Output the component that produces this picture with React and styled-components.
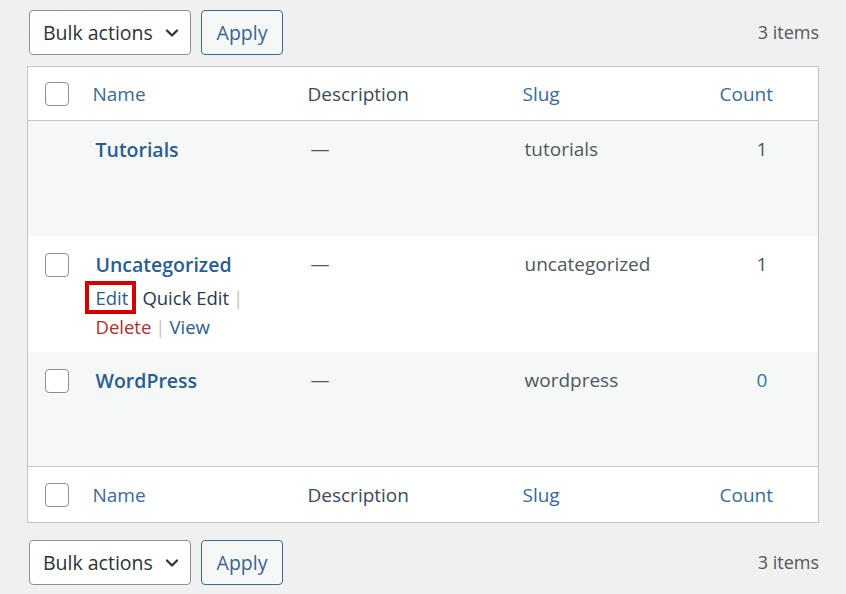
import React from "react";
import styled, { createGlobalStyle } from "styled-components";

const GlobalStyle = createGlobalStyle`
  html, body {
    margin: 0;
    padding: 0;
    background: #f0f0f1;
  }
  body {
    font-family: "Open Sans", "Noto Sans", "Liberation Sans", sans-serif;
    font-size: 19px;
    color: #3c434a;
  }
`;

const Page = styled.div`
  width: 846px;
  height: 594px;
  padding: 10px 27px 0 27px;
  box-sizing: border-box;
  display: flex;
  flex-direction: column;
`;

const Toolbar = styled.div`
  display: flex;
  align-items: center;
  gap: 10px;
  padding-left: 2px;
  margin: ${p => (p.bottom ? "17px 0 0" : "0 0 11px")};
`;

const Select = styled.div`
  width: 162px;
  height: 45px;
  box-sizing: border-box;
  border: 1px solid #8c8f94;
  border-radius: 4px;
  background: #fff;
  display: flex;
  align-items: center;
  justify-content: space-between;
  padding: 0 11px 0 13px;
  color: #2c3338;
  font-size: 19.5px;
`;

const ApplyButton = styled.button`
  width: 82px;
  height: 45px;
  box-sizing: border-box;
  border: 1px solid #3a6d8c;
  border-radius: 4px;
  background: #f6f7f7;
  color: #3a6290;
  font-family: inherit;
  font-size: 19.5px;
  padding: 0;
`;

const ItemCount = styled.span`
  margin-left: auto;
  color: #50575e;
  font-size: 18px;
  padding-bottom: 1px;
`;

const Table = styled.table`
  width: 792px;
  border-collapse: collapse;
  border: 1px solid #c3c4c7;
  background: #fff;
  table-layout: fixed;
`;

const HeadRow = styled.tr`
  height: ${p => (p.foot ? 56 : 54)}px;
  border-${p => (p.foot ? "top" : "bottom")}: 1px solid #c3c4c7;
`;

const Th = styled.th`
  text-align: left;
  font-weight: 400;
  padding: ${p => (p.foot ? "1px" : "0")} 0 0 ${p => p.pad || 12}px;
  color: ${p => (p.link ? "#3b6a98" : "#3c4a5a")};
  vertical-align: middle;
  white-space: nowrap;
`;

const Row = styled.tr`
  height: ${p => p.h}px;
  background: ${p => (p.striped ? "#f6f7f7" : "#fff")};
`;

const Td = styled.td`
  vertical-align: top;
  padding: 14px 0 0 ${p => p.pad || 12}px;
  line-height: 29px;
  color: ${p => p.color || "#50575e"};
`;

const CheckCell = styled.td`
  vertical-align: ${p => (p.head ? "middle" : "top")};
  padding: ${p => (p.head ? "0 0 0 17px" : "17px 0 0 17px")};
`;

const Checkbox = styled.span`
  display: block;
  width: 24px;
  height: 24px;
  box-sizing: border-box;
  border: 1px solid #8c8f94;
  border-radius: 4px;
  background: #fff;
`;

const Title = styled.a`
  font-weight: 600;
  font-size: 19.5px;
  color: #2a5d8f;
  text-decoration: none;
  padding-left: 3px;
`;

const Actions = styled.div`
  font-size: 18.5px;
  line-height: 29px;
  padding-left: 3px;
  margin-top: 3px;
  color: #2b3a48;
`;

const ActionLink = styled.a`
  color: ${p => p.color || "#2c5d8a"};
  text-decoration: none;
`;

const Highlight = styled.span`
  display: inline-block;
  border: 4px solid #d40000;
  line-height: 25px;
  padding: 0 4px 0 7px;
  margin: -2px 6px -2px -11px;
`;

const Sep = styled.span`
  color: #c3c4c7;
  margin: 0 4px 0 4px;
`;

const Dash = styled.span`
  padding-left: 3px;
  color: #50575e;
`;

const Chevron = () => (
  <svg width="14" height="14" viewBox="0 0 14 14" fill="none">
    <path d="M2 4.5l5 5 5-5" stroke="#2c3338" strokeWidth="2.2" strokeLinecap="round" strokeLinejoin="round" />
  </svg>
);

const TableActions = ({ bottom }) => (
  <Toolbar bottom={bottom}>
    <Select>
      <span>Bulk actions</span>
      <Chevron />
    </Select>
    <ApplyButton>Apply</ApplyButton>
    <ItemCount>3 items</ItemCount>
  </Toolbar>
);

const HeaderCells = ({ foot }) => (
  <HeadRow foot={foot}>
    <CheckCell head>
      <Checkbox />
    </CheckCell>
    <Th foot={foot} link>Name</Th>
    <Th foot={foot}>Description</Th>
    <Th foot={foot} link>Slug</Th>
    <Th foot={foot} link>Count</Th>
  </HeadRow>
);

const terms = [
  { name: "Tutorials", slug: "tutorials", count: "1", noCheck: true, h: 115 },
  { name: "Uncategorized", slug: "uncategorized", count: "1", actions: true, h: 116 },
  { name: "WordPress", slug: "wordpress", count: "0", countLink: true, h: 115 },
];

export default function App() {
  return (
    <>
      <GlobalStyle />
      <Page>
        <TableActions />
        <Table>
          <colgroup>
            <col style={{ width: 53 }} />
            <col style={{ width: 215 }} />
            <col style={{ width: 215 }} />
            <col style={{ width: 197 }} />
            <col />
          </colgroup>
          <thead>
            <HeaderCells />
          </thead>
          <tbody>
            {terms.map((t, i) => (
              <Row key={t.slug} h={t.h} striped={i % 2 === 0}>
                <CheckCell>{!t.noCheck && <Checkbox />}</CheckCell>
                <Td>
                  <Title href="#">{t.name}</Title>
                  {t.actions && (
                    <Actions>
                      <Highlight>
                        <ActionLink href="#">Edit</ActionLink>
                      </Highlight>
                      <ActionLink color="#2b3a48" href="#">Quick Edit</ActionLink>
                      <Sep>|</Sep>
                      <br />
                      <ActionLink color="#b32d2e" href="#">Delete</ActionLink>
                      <Sep>|</Sep>
                      <ActionLink href="#">View</ActionLink>
                    </Actions>
                  )}
                </Td>
                <Td>
                  <Dash>—</Dash>
                </Td>
                <Td pad={14}>{t.slug}</Td>
                <Td pad={49} color={t.countLink ? "#2f7a9e" : "#50575e"}>{t.count}</Td>
              </Row>
            ))}
          </tbody>
          <tfoot>
            <HeaderCells foot />
          </tfoot>
        </Table>
        <TableActions bottom />
      </Page>
    </>
  );
}
